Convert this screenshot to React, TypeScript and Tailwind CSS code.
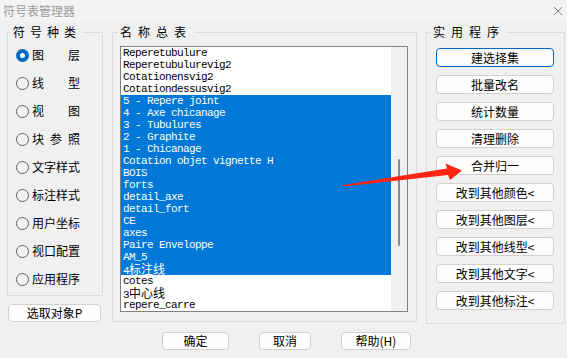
import clsx from 'clsx';

const rows: { t: string; c?: string }[] = [
  { t: 'Reperetubulure' },
  { t: 'Reperetubulurevig2' },
  { t: 'Cotationensvig2' },
  { t: 'Cotationdessusvig2' },
  { t: '5 - Repere joint' },
  { t: '4 - Axe chicanage' },
  { t: '3 - Tubulures' },
  { t: '2 - Graphite' },
  { t: '1 - Chicanage' },
  { t: 'Cotation objet vignette H' },
  { t: 'BOIS' },
  { t: 'forts' },
  { t: 'detail_axe' },
  { t: 'detail_fort' },
  { t: 'CE' },
  { t: 'axes' },
  { t: 'Paire Enveloppe' },
  { t: 'AM_5' },
  { t: '4', c: '标注线' },
  { t: 'cotes' },
  { t: '3', c: '中心线' },
  { t: 'repere_carre' },
];

const kinds = ['图层', '线型', '视图', '块参照', '文字样式', '标注样式', '用户坐标', '视口配置', '应用程序'];

const tools = ['建选择集', '批量改名', '统计数量', '清理删除', '合并归一', '改到其他颜色<', '改到其他图层<', '改到其他线型<', '改到其他文字<', '改到其他标注<'];

function Radio({ checked }: { checked?: boolean }) {
  if (checked) {
    return (
      <span className="w-[13px] h-[13px] rounded-full bg-[#0067c0] flex items-center justify-center shrink-0">
        <span className="w-[5px] h-[5px] rounded-full bg-white" />
      </span>
    );
  }
  return <span className="w-[13px] h-[13px] rounded-full border border-[#5f5f5f] bg-[#f4f4f4] shrink-0" />;
}

function Btn({ label, className, focus }: { label: string; className?: string; focus?: boolean }) {
  return (
    <button
      className={clsx(
        'flex items-center justify-center rounded-[4px] bg-[#fdfdfd] text-[12px] leading-[14px] text-black border',
        focus ? 'border-[#0067c0]' : 'border-[#d0d0d0]',
        className
      )}
    >
      {label}
    </button>
  );
}

export default function App() {
  return (
    <div className="relative w-[567px] h-[358px] overflow-hidden bg-[#f0f0f0] font-['Noto_Sans_CJK_SC',sans-serif] text-[12px] leading-[14px] text-black">
      <div className="h-[22px] bg-[#f3f3f3] flex items-center justify-between pl-[3px] pr-[4px]">
        <span className="text-[#9b9b9b]">符号表管理器</span>
        <svg width="10" height="10" viewBox="0 0 10 10">
          <path d="M1 1L9 9M9 1L1 9" stroke="#8a8a8a" strokeWidth="1" fill="none" />
        </svg>
      </div>

      <div className="flex items-start pl-[7px] mt-[3px]">
        <div className="w-[96px] flex flex-col">
          <fieldset className="border border-[#dcdcdc]">
            <legend className="ml-[3px] px-[2px] tracking-[5px]">符号种类</legend>
            <div className="pt-[2px] pb-[2px] pl-[8px]">
              {kinds.map((k, i) => (
                <div key={k} className="h-[28px] flex items-center gap-[3px]">
                  <Radio checked={i === 0} />
                  <span className="w-[48px] flex justify-between">
                    {k.split('').map((ch, j) => (
                      <span key={j}>{ch}</span>
                    ))}
                  </span>
                </div>
              ))}
            </div>
          </fieldset>
          <Btn label="选取对象P" className="mt-[8px] ml-[1px] w-[93px] h-[18px]" />
        </div>

        <fieldset className="ml-[9px] w-[305px] border border-[#dcdcdc]">
          <legend className="ml-[5px] px-[2px] tracking-[6px]">名称总表</legend>
          <div className="pt-[7px] pl-[7px] pb-[9px]">
            <div className="w-[288px] h-[266px] border border-[#828282] bg-white flex">
              <div className="w-[270px] font-['Liberation_Mono','Noto_Sans_CJK_SC',monospace] text-[11px] tracking-[-0.6px]">
                {rows.map((r, i) => {
                  const sel = i >= 4 && i <= 18;
                  return (
                    <div
                      key={i}
                      className={clsx(
                        'h-[12px] leading-[12px] pl-[2px] whitespace-nowrap',
                        sel ? 'bg-[#0078d7] text-white' : 'text-black'
                      )}
                    >
                      {r.t}
                      {r.c && (
                        <span className="font-['Noto_Sans_CJK_SC',sans-serif] text-[12px] leading-[12px] tracking-normal">{r.c}</span>
                      )}
                    </div>
                  );
                })}
              </div>
              <div className="w-[16px] bg-[#f0f0f0] pt-[112px]">
                <div className="mx-auto w-[2px] h-[87px] rounded-full bg-[#8a8a8a]" />
              </div>
            </div>
          </div>
        </fieldset>

        <fieldset className="ml-[9px] w-[139px] border border-[#dcdcdc]">
          <legend className="ml-[4px] px-[2px] tracking-[6px]">实用程序</legend>
          <div className="pt-[9px] pl-[9px] pb-[13px] flex flex-col gap-[8px]">
            {tools.map((t, i) => (
              <Btn key={t} label={t} focus={i === 0} className="w-[118px] h-[19px]" />
            ))}
          </div>
        </fieldset>
      </div>

      <div className="flex gap-[30px] pl-[162px] mt-[8px]">
        <Btn label="确定" className="w-[67px] h-[18px]" />
        <Btn label="取消" className="w-[52px] h-[18px]" />
        <Btn label="帮助(H)" className="w-[70px] h-[18px]" />
      </div>

      <svg className="absolute inset-0 pointer-events-none" width="567" height="358" viewBox="0 0 567 358">
        <polygon
          points="343,185 447,168.5 445.5,163.5 462,170.5 450,180 448,175 343,186.5"
          fill="#ff2414"
        />
      </svg>
    </div>
  );
}
